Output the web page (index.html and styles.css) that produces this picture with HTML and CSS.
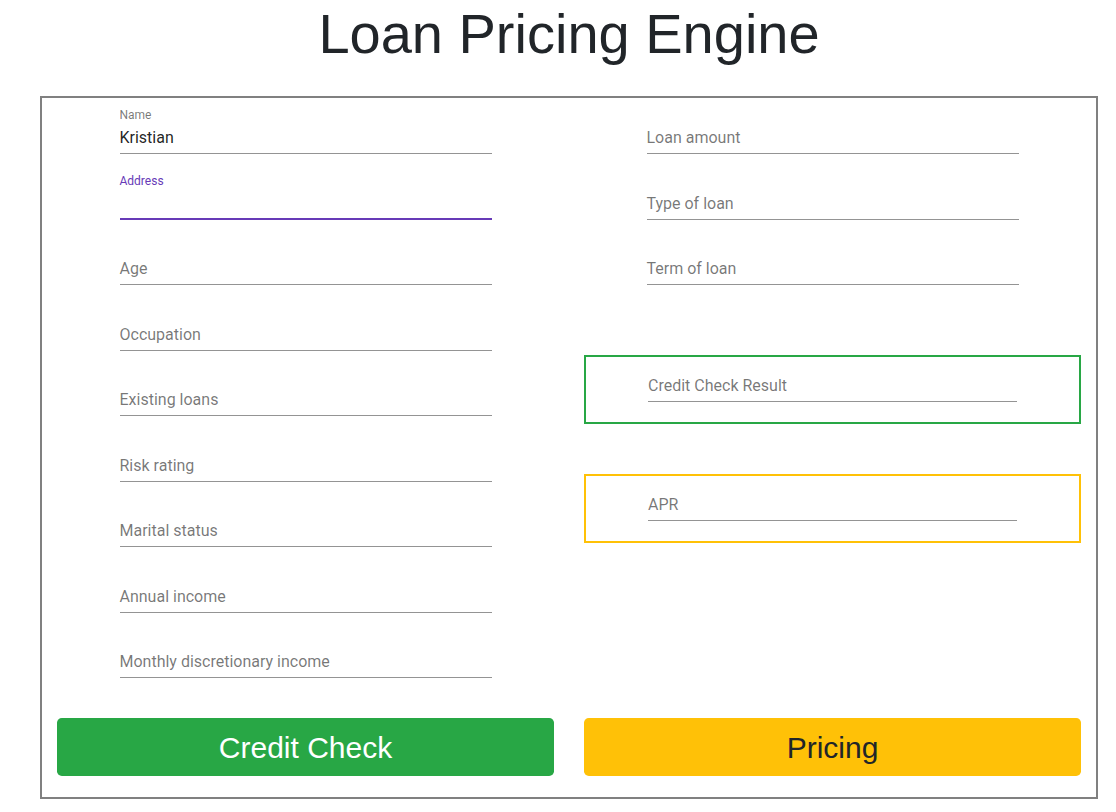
FILE: index.html
```html
<!DOCTYPE html>
<html lang="en">
<head>
<meta charset="utf-8">
<title>Loan Pricing Engine</title>
<link rel="stylesheet" href="styles.css">
</head>
<body>
<div class="page">
  <h1 class="title">Loan Pricing Engine</h1>
  <div class="panel">
    <div class="col col-left">
      <div class="field field--filled"><label class="field-label">Name</label><input class="field-input" type="text" value="Kristian"></div>
      <div class="field field--focused"><label class="field-label">Address</label><input class="field-input" type="text"></div>
      <div class="field"><label class="field-label">Age</label><input class="field-input" type="text"></div>
      <div class="field"><label class="field-label">Occupation</label><input class="field-input" type="text"></div>
      <div class="field"><label class="field-label">Existing loans</label><input class="field-input" type="text"></div>
      <div class="field"><label class="field-label">Risk rating</label><input class="field-input" type="text"></div>
      <div class="field"><label class="field-label">Marital status</label><input class="field-input" type="text"></div>
      <div class="field"><label class="field-label">Annual income</label><input class="field-input" type="text"></div>
      <div class="field"><label class="field-label">Monthly discretionary income</label><input class="field-input" type="text"></div>
    </div>
    <div class="col col-right">
      <div class="field"><label class="field-label">Loan amount</label><input class="field-input" type="text"></div>
      <div class="field"><label class="field-label">Type of loan</label><input class="field-input" type="text"></div>
      <div class="field"><label class="field-label">Term of loan</label><input class="field-input" type="text"></div>
      <div class="result-box result-box--success">
        <div class="field field--boxed"><label class="field-label">Credit Check Result</label><input class="field-input" type="text"></div>
      </div>
      <div class="result-box result-box--warning">
        <div class="field field--boxed"><label class="field-label">APR</label><input class="field-input" type="text"></div>
      </div>
    </div>
    <button class="btn btn--success" type="button">Credit Check</button>
    <button class="btn btn--warning" type="button">Pricing</button>
  </div>
</div>
</body>
</html>
```
FILE: styles.css
```css
* { box-sizing: border-box; }

html, body {
  margin: 0;
  padding: 0;
  background: #fff;
}

body {
  font-family: "Liberation Sans", Arial, sans-serif;
  color: #212529;
}

.page {
  width: 1058px;
  margin-left: 40px;
}

.title {
  margin: 0 0 29px;
  font-size: 56px;
  font-weight: 400;
  line-height: 1.2;
  text-align: center;
  color: #212529;
}

.panel {
  border: 2px solid #808080;
  padding: 8px 15px 21px;
  display: grid;
  grid-template-columns: 1fr 1fr;
  column-gap: 30px;
}

.col {
  display: flex;
  flex-direction: column;
  align-items: center;
}

.col-left { gap: 17.5px; }

.col-right .field + .field { margin-top: 17.5px; }

.field {
  position: relative;
  width: 372px;
  height: 48px;
  padding-top: 16px;
  font-family: Roboto, "Liberation Sans", sans-serif;
  flex: none;
}

.field::before {
  content: "";
  position: absolute;
  left: 0;
  right: 0;
  bottom: 0;
  border-bottom: 1px solid rgba(0, 0, 0, 0.42);
}

.field-label {
  position: absolute;
  left: 0;
  top: 24px;
  font-size: 16px;
  line-height: 1;
  color: rgba(0, 0, 0, 0.54);
  white-space: nowrap;
}

.field-input {
  display: block;
  width: 100%;
  height: 32px;
  padding: 6px 0 7px;
  border: 0;
  margin: 0;
  background: transparent;
  font-family: Roboto, "Liberation Sans", sans-serif;
  font-size: 16px;
  line-height: 19px;
  color: rgba(0, 0, 0, 0.87);
  outline: none;
}

.field--filled .field-label,
.field--focused .field-label {
  top: 3px;
  font-size: 12px;
}

.field--focused .field-label { color: #673ab7; }

.field--focused::before {
  border-bottom: 2px solid #673ab7;
}

.result-box {
  width: 100%;
  border: 2px solid;
  padding-bottom: 20px;
  display: flex;
  justify-content: center;
}

.result-box .field { width: 369px; }

.result-box--success {
  border-color: #28a745;
  margin-top: 70px;
}

.result-box--warning {
  border-color: #ffc107;
  margin-top: 50px;
}

.field--boxed { margin-top: -3px; }

.btn {
  margin-top: 40px;
  height: 58px;
  border: 0;
  border-radius: 4.8px;
  font-family: "Liberation Sans", Arial, sans-serif;
  font-size: 30px;
  line-height: 1.5;
  padding: 0;
  cursor: pointer;
}

.btn--success {
  background: #28a745;
  color: #fff;
}

.btn--warning {
  background: #ffc107;
  color: #212529;
}
```
